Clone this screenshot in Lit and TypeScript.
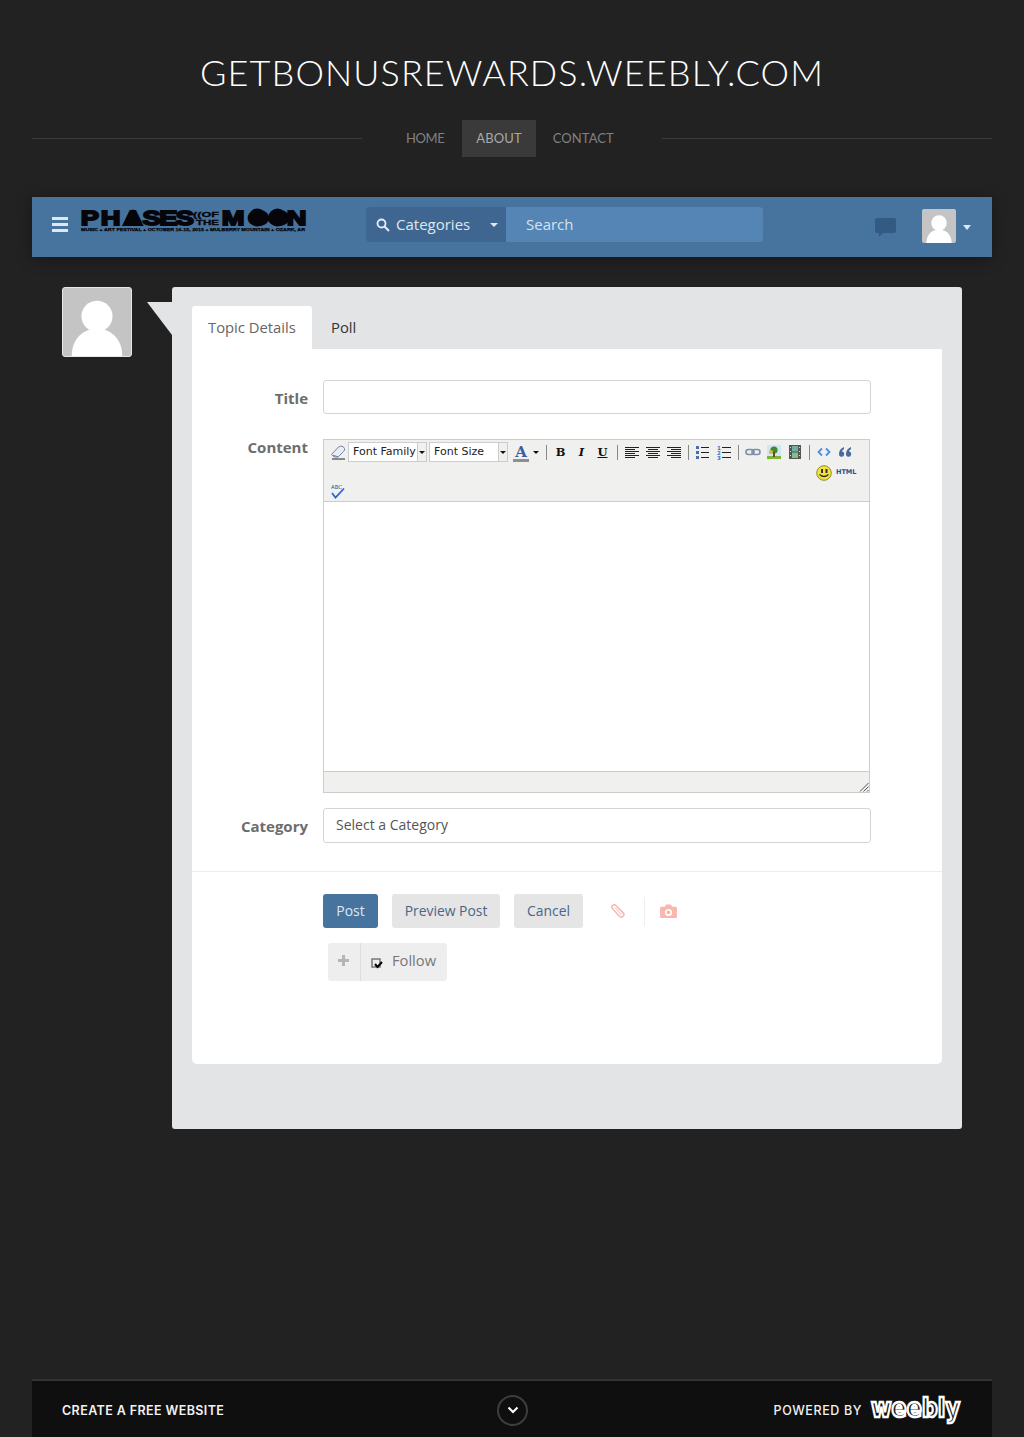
import { LitElement, html, css, svg } from 'lit';
import { customElement } from 'lit/decorators.js';

const person = html`<svg class="person" viewBox="0 0 70 70">
  <circle cx="35" cy="29" r="16" fill="#fff"></circle>
  <path d="M9 70C9 52 21 42 35 42s26 10 26 28z" fill="#fff"></path>
</svg>`;

// toolbar icons, all on a 16 box
const lines = (rows: number[][]) => rows.map(([a, b], i) =>
  svg`<rect x=${a} y=${3 + i * 2} width=${b - a} height="1" fill="#222"></rect>`);

const icons = {
  eraser: svg`<path d="M1.500 10.500l7-7.500q2-1.500 4.500-.5l1.500 2q.5 1.500-1 3l-5.500 5.500H4z" fill="#e8edf6" stroke="#6f84a8"></path><path d="M3 11l5 2" stroke="#6f84a8" fill="none"></path><path d="M2 15h13" stroke="#222"></path>`,
  left: lines([[1, 15], [1, 11], [1, 15], [1, 11], [1, 15], [1, 11]]),
  center: lines([[1, 15], [3, 13], [1, 15], [3, 13], [1, 15], [3, 13]]),
  right: lines([[1, 15], [5, 15], [1, 15], [5, 15], [1, 15], [5, 15]]),
  bullets: svg`<g fill="#4a6fa8"><rect x="1" y="2" width="3" height="3"></rect><rect x="1" y="7" width="3" height="3"></rect><rect x="1" y="12" width="3" height="3"></rect></g>
    <g fill="#222"><rect x="6" y="3" width="8" height="1"></rect><rect x="6" y="8" width="8" height="1"></rect><rect x="6" y="13" width="8" height="1"></rect></g>`,
  numbers: svg`<g fill="#3f6fd0" font-family="DejaVu Sans" font-weight="700" font-size="5.500"><text x="1" y="5.500">1</text><text x="1" y="10.500">2</text><text x="1" y="15.500">3</text></g>
    <g fill="#222"><rect x="6" y="3" width="9" height="1"></rect><rect x="6" y="8" width="9" height="1"></rect><rect x="6" y="13" width="9" height="1"></rect></g>`,
  link: svg`<g fill="none" stroke="#7d8ea8" stroke-width="1.600"><rect x="1" y="5.500" width="8" height="5" rx="2.500"></rect><rect x="7" y="5.500" width="8" height="5" rx="2.500"></rect></g>`,
  image: svg`<rect x="1" y="1" width="14" height="14" fill="#cfe6f5"></rect><rect x="1" y="12" width="14" height="3" fill="#7db536"></rect><circle cx="8" cy="6" r="3.600" fill="#3f8a2c"></circle><circle cx="5" cy="8" r="2" fill="#e0b040"></circle><rect x="7" y="8" width="2" height="5" fill="#6b4a20"></rect>`,
  film: svg`<rect x="2" y="1" width="12" height="14" fill="#555"></rect><rect x="5" y="2" width="6" height="5.500" fill="#6cb0a8"></rect><rect x="5" y="8.500" width="6" height="5.500" fill="#7fc08a"></rect><g fill="#ddd"><rect x="3" y="3" width="1" height="1"></rect><rect x="3" y="7" width="1" height="1"></rect><rect x="3" y="11" width="1" height="1"></rect><rect x="12" y="3" width="1" height="1"></rect><rect x="12" y="7" width="1" height="1"></rect><rect x="12" y="11" width="1" height="1"></rect></g>`,
  code: svg`<path d="M6 4.500L2.500 8 6 11.500M10 4.500L13.500 8 10 11.500" fill="none" stroke="#4a90e0" stroke-width="1.800"></path>`,
  quote: svg`<path d="M7 3Q2 5 2 10a2.600 2.600 0 1 0 3-2.400Q5 6 7 5zM14 3q-5 2-5 7a2.600 2.600 0 1 0 3-2.400Q12 6 14 5z" fill="#4a6a9c"></path>`,
  smile: svg`<circle cx="8" cy="8" r="7.300" fill="#f5e23a" stroke="#8f8a30"></circle><rect x="5" y="4" width="2" height="4" fill="#333"></rect><rect x="9.500" y="4" width="2" height="4" fill="#333"></rect><path d="M3.500 9.500q4.500 4 9 0" fill="none" stroke="#333" stroke-width="1.200"></path>`,
  spell: svg`<text x="1" y="6" font-family="DejaVu Sans" font-size="5.500" fill="#2f4f90" textLength="11" lengthAdjust="spacingAndGlyphs">ABC</text><path d="M2 10l3.500 4.500L14 5.500" fill="none" stroke="#2f62d8" stroke-width="1.800"></path>`,
};

const ico = (body: unknown) => html`<svg class="ico" viewBox="0 0 16 16">${body}</svg>`;

@customElement('app-root')
export class AppRoot extends LitElement {
  static styles = css`
    :host {
      display: block;
      min-height: 1437px;
      background: #222;
      font-family: "Open Sans", "Noto Sans", sans-serif;
      overflow: hidden;
    }
    * { box-sizing: border-box; }
    .title {
      margin: 0;
      padding-top: 50px;
      height: 120px;
      text-align: center;
      font: 300 36px/44px Lato, sans-serif;
      color: #fff;
      letter-spacing: 1.1px;
    }
    .menu {
      display: flex;
      align-items: center;
      height: 37px;
      padding: 0 32px;
    }
    .menu .line-out { flex: 1; height: 1px; background: #3c3c3c; }
    .menu .links { display: flex; width: 300px; padding-left: 30px; }
    .menu a {
      font: 400 13px/37px Lato, sans-serif;
      color: #818181;
      padding: 0 14px;
      letter-spacing: .1px;
    }
    .menu a.home { letter-spacing: -.4px; }
    .menu a.on { background: #3a3a3a; color: #a8a8a8; margin: 0 3px 0 4px; }
    .page { padding: 40px 32px 0; }
    .bar {
      display: flex;
      align-items: flex-start;
      height: 60px;
      background: #47739f;
      box-shadow: 0 2px 14px rgba(0, 0, 0, .35);
    }
    .burger { width: 16px; margin: 20px 12px 0 20px; display: grid; gap: 3px; }
    .burger i { display: block; height: 3px; background: #dfe8f1; }
    .logo { width: 228px; height: 26px; margin-top: 10px; display: block; }
    .cats {
      width: 140px;
      height: 35px;
      margin: 10px 0 0 58px;
      background: #3f6690;
      border-radius: 4px 0 0 4px;
      display: flex;
      align-items: center;
      padding: 0 0 2px 10px;
      color: #dfe8f1;
      font-size: 15px;
    }
    .cats svg { width: 14px; height: 14px; margin: 2px 6px 0 0; }
    .cats .caret { margin: 2px 0 0 20px; }
    .caret {
      width: 0;
      height: 0;
      border: 4px solid transparent;
      border-top-color: #dfe8f1;
      border-bottom: 0;
    }
    .search {
      width: 257px;
      height: 35px;
      margin-top: 10px;
      background: #5585b5;
      border-radius: 0 4px 4px 0;
      padding-left: 20px;
      color: #d5e2ef;
      font-size: 15px;
      line-height: 35px;
    }
    .chat { width: 21px; height: 20px; margin: 21px 26px 0 112px; }
    .me {
      width: 34px;
      height: 34px;
      margin-top: 12px;
      background: #c4c4c4;
      border-radius: 2px;
      overflow: hidden;
    }
    .bar > .caret { margin: 28px 0 0 7px; border-width: 5px 4.500px 0; }
    .layout { display: flex; align-items: flex-start; padding: 30px 30px 0; }
    .avatar {
      width: 70px;
      height: 70px;
      background: #c4c4c4;
      border: 1px solid #e6e6e6;
      border-radius: 3px;
      overflow: hidden;
      flex: none;
    }
    .person { display: block; width: 100%; height: 100%; }
    .card {
      position: relative;
      margin-left: 40px;
      width: 790px;
      height: 842px;
      padding: 19px 20px 0;
      background: #e3e4e6;
      border-radius: 3px;
    }
    .tip {
      position: absolute;
      left: -25px;
      top: 15px;
      width: 25px;
      height: 33px;
      background: #e3e4e6;
      clip-path: polygon(0 0, 100% 0, 100% 100%);
    }
    .tabs { display: flex; height: 43px; }
    .tabs span {
      padding: 0 15px;
      font-size: 14.800px;
      line-height: 43px;
      color: #333;
      white-space: nowrap;
    }
    .tabs span.on {
      padding: 0 16px;
      width: 120px;
      background: #fff;
      color: #666;
      margin-right: 4px;
      border-radius: 3px 3px 0 0;
    }
    .panel {
      height: 715px;
      background: #fff;
      border-radius: 0 0 5px 5px;
    }
    .row { display: flex; padding-top: 31px; }
    .row label {
      width: 116px;
      height: 34px;
      margin-right: 15px;
      text-align: right;
      font-size: 15px;
      font-weight: 700;
      color: #6d6d6d;
      line-height: 36px;
    }
    .field {
      width: 548px;
      height: 34px;
      border: 1px solid #d4d4d4;
      border-radius: 3px;
    }
    .editor-row { padding-top: 25px; }
    .editor-row label { line-height: 16px; }
    .editor { width: 547px; height: 354px; border: 1px solid #ccc; display: flex; flex-direction: column; }
    .tools { height: 62px; background: #f0f0ee; border-bottom: 1px solid #ccc; padding-left: 6px; }
    .line { display: flex; align-items: center; height: 24px; }
    .line.second {
      height: 17px;
      margin-left: 486px;
      font: 700 6.500px/17px "DejaVu Sans", sans-serif;
      color: #26508f;
    }
    .line.second span { margin-left: 4px; }
    .line.third { height: 20px; }
    .ico { display: block; width: 16px; height: 16px; flex: none; }
    .cell { width: 21px; display: flex; justify-content: center; font: 700 11.500px "DejaVu Serif", serif; color: #111; flex: none; }
    .cell.i { font-style: italic; }
    .cell.u { text-decoration: underline; }
    .sep { width: 8px; height: 15px; flex: none; display: flex; justify-content: center; }
    .sep::before { content: ""; width: 1px; background: #888; }
    .pick {
      width: 70px;
      height: 20px;
      margin-left: 2px;
      background: #fff;
      border: 1px solid #ccc;
      padding-left: 4px;
      font: 11px/18px "DejaVu Sans", sans-serif;
      color: #222;
      flex: none;
      white-space: nowrap;
    }
    .open {
      width: 9px;
      height: 20px;
      background: #f0f0ee;
      border: 1px solid #ccc;
      border-left: 0;
      display: flex;
      align-items: center;
      justify-content: center;
      flex: none;
    }
    .down { width: 0; height: 0; border: 3px solid transparent; border-top-color: #111; border-bottom: 0; }
    .color {
      width: 16px;
      height: 20px;
      margin-left: 5px;
      padding-top: 3px;
      text-align: center;
      font: 700 15px/14px "DejaVu Serif", serif;
      color: #3a5fa0;
      border-bottom: 3px solid #8f8f8f;
      flex: none;
    }
    .colorarrow { width: 13px; display: flex; justify-content: center; flex: none; }
    .write { flex: 1; }
    .status { height: 21px; background: #f0f0ee; border-top: 1px solid #ccc; position: relative; }
    .grip { position: absolute; right: 0; bottom: 0; width: 10px; height: 10px; }
    .select-row { padding-top: 15px; }
    .select-row label { line-height: 36px; }
    .select { height: 35px; padding-left: 12px; font-size: 14px; line-height: 32px; color: #555; }
    .divider { height: 1px; background: #ececec; margin-top: 28px; }
    .actions { display: flex; align-items: center; padding: 22px 0 0 131px; }
    .btn {
      height: 34px;
      border-radius: 3px;
      background: #e5e5e5;
      color: #47668a;
      font-size: 13.900px;
      line-height: 34px;
      text-align: center;
      margin-right: 14px;
    }
    .btn.main { width: 55px; background: #47739f; color: #dfe8f1; }
    .btn.preview { width: 108px; }
    .btn.cancel { width: 69px; }
    .clip { width: 16px; height: 16px; margin-left: 13px; }
    .divide { width: 1px; height: 29px; background: #eee; margin: 0 15px 0 18px; }
    .cam { width: 17px; height: 15px; }
    .follow {
      display: flex;
      width: 119px;
      height: 38px;
      margin: 15px 0 0 136px;
      background: #eee;
      border-radius: 3px;
      color: #777;
      font-size: 14.700px;
      line-height: 35px;
    }
    .plus { width: 33px; border-right: 1px solid #ddd; position: relative; flex: none; }
    .plus::before, .plus::after { content: ""; position: absolute; background: #b5b5b5; }
    .plus::before { left: 10px; top: 16px; width: 11px; height: 3px; }
    .plus::after { left: 14px; top: 12px; width: 3px; height: 11px; }
    .tick { width: 13px; height: 13px; margin: 14px 8px 0 10px; flex: none; }
    .foot {
      display: flex;
      align-items: center;
      height: 58px;
      margin: 250px 32px 0;
      padding: 2px 30px 0;
      background: #0f0f0f;
      border-top: 2px solid #333;
      color: #f2f2f2;
      font: 600 12.500px Inter, sans-serif;
    }
    .foot .left { width: 435px; letter-spacing: .4px; }
    .roll { width: 31px; height: 31px; border: 2px solid #3d3d3d; border-radius: 50%; display: flex; align-items: center; justify-content: center; }
    .roll svg { width: 12px; height: 8px; }
    .foot .right { margin-left: auto; font-weight: 500; letter-spacing: .6px; }
    .weebly { width: 92px; height: 36px; margin-left: 8px; }
  `;

  render() {
    return html`
      <h1 class="title">GETBONUSREWARDS.WEEBLY.COM</h1>
      <nav class="menu">
        <div class="line-out"></div>
        <div class="links">
          <a class="home">HOME</a><a class="on">ABOUT</a><a>CONTACT</a>
        </div>
        <div class="line-out"></div>
      </nav>
      <div class="page">
        <header class="bar">
          <div class="burger"><i></i><i></i><i></i></div>
          <svg class="logo" viewBox="0 0 228 26">
            <g fill="#05050a" stroke="#05050a" font-family="Liberation Sans" font-weight="700">
              <g transform="scale(1.300 1)" font-size="21" stroke-width="1.800">
                <text x="0.500 16 33 48 61 73.600" y="18">PHASES</text>
                <text x="109 129 144.600 159" y="18">MOON</text>
              </g>
              <text x="113" y="9.500" font-size="7.500" stroke-width=".3" textLength="26" lengthAdjust="spacingAndGlyphs">((OF</text>
              <text x="116" y="18" font-size="7.500" stroke-width=".3" textLength="23" lengthAdjust="spacingAndGlyphs">THE</text>
              <text x="1" y="24" font-size="4.200" stroke-width=".25" textLength="224" lengthAdjust="spacingAndGlyphs">MUSIC + ART FESTIVAL + OCTOBER 16-15, 2015 + MULBERRY MOUNTAIN + OZARK, AR</text>
              <polygon points="43,19 53,2 63,19" stroke="none"></polygon>
              <circle cx="177.500" cy="10.500" r="9" stroke="none"></circle>
              <circle cx="197.500" cy="10.500" r="9" stroke="none"></circle>
            </g>
          </svg>
          <div class="cats">
            <svg viewBox="0 0 14 14"><circle cx="5.500" cy="5.500" r="4" fill="none" stroke="#e6edf4" stroke-width="1.800"></circle><path d="M8.500 8.500L13 13" stroke="#e6edf4" stroke-width="2"></path></svg>
            Categories
            <span class="caret"></span>
          </div>
          <div class="search">Search</div>
          <svg class="chat" viewBox="0 0 21 20"><path d="M2 0h17a2 2 0 0 1 2 2v11a2 2 0 0 1-2 2H8l-4 4v-4H2a2 2 0 0 1-2-2V2a2 2 0 0 1 2-2z" fill="#335a82"></path></svg>
          <div class="me">${person}</div>
          <span class="caret"></span>
        </header>
        <div class="layout">
          <div class="avatar">${person}</div>
          <div class="card">
            <div class="tip"></div>
            <div class="tabs"><span class="on">Topic Details</span><span>Poll</span></div>
            <div class="panel">
              <div class="row"><label>Title</label><div class="field"></div></div>
              <div class="row editor-row">
                <label>Content</label>
                <div class="editor">
                  <div class="tools">
                    <div class="line">
                      ${ico(icons.eraser)}
                      <div class="pick">Font Family</div><div class="open"><i class="down"></i></div>
                      <div class="pick">Font Size</div><div class="open"><i class="down"></i></div>
                      <div class="color">A</div>
                      <div class="colorarrow"><i class="down"></i></div>
                      <i class="sep"></i>
                      <span class="cell">B</span><span class="cell i">I</span><span class="cell u">U</span>
                      <i class="sep"></i>
                      <span class="cell">${ico(icons.left)}</span><span class="cell">${ico(icons.center)}</span><span class="cell">${ico(icons.right)}</span>
                      <i class="sep"></i>
                      <span class="cell">${ico(icons.bullets)}</span><span class="cell">${ico(icons.numbers)}</span>
                      <i class="sep"></i>
                      <span class="cell">${ico(icons.link)}</span><span class="cell">${ico(icons.image)}</span><span class="cell">${ico(icons.film)}</span>
                      <i class="sep"></i>
                      <span class="cell">${ico(icons.code)}</span><span class="cell">${ico(icons.quote)}</span>
                    </div>
                    <div class="line second">${ico(icons.smile)}<span>HTML</span></div>
                    <div class="line third">${ico(icons.spell)}</div>
                  </div>
                  <div class="write"></div>
                  <div class="status">
                    <svg class="grip" viewBox="0 0 10 10"><path d="M9.500 1L1 9.500M9.500 4.500L4.500 9.500M9.500 8L8 9.500" stroke="#555" fill="none"></path></svg>
                  </div>
                </div>
              </div>
              <div class="row select-row"><label>Category</label><div class="field select">Select a Category</div></div>
              <div class="divider"></div>
              <div class="actions">
                <div class="btn main">Post</div>
                <div class="btn preview">Preview Post</div>
                <div class="btn cancel">Cancel</div>
                <svg class="clip" viewBox="0 0 16 16"><path d="M13.500 10.500L6 2.500a2.300 2.300 0 0 0-3.500 3l7 8a2.700 2.700 0 0 0 4-3.500L7 3.800" fill="none" stroke="#f9b7ae" stroke-width="1.500"></path><path d="M5 4.500l6.500 7.500" stroke="#f9b7ae"></path></svg>
                <div class="divide"></div>
                <svg class="cam" viewBox="0 0 18 16"><path d="M1.500 3H5l1.500-2.500h5L13 3h3.500A1.500 1.500 0 0 1 18 4.500v9a1.500 1.500 0 0 1-1.500 1.500h-15A1.500 1.500 0 0 1 0 13.500v-9A1.500 1.500 0 0 1 1.500 3z" fill="#f9b7ae"></path><circle cx="9" cy="9" r="3.800" fill="#fff"></circle><circle cx="9" cy="9" r="2" fill="#f9b7ae"></circle></svg>
              </div>
              <div class="follow">
                <div class="plus"></div>
                <svg class="tick" viewBox="0 0 13 13"><rect x="1" y="2" width="8" height="8" fill="#eee" stroke="#777" stroke-width="1.500"></rect><path d="M4 7l2.500 3L11 5" fill="none" stroke="#000" stroke-width="2"></path></svg>
                Follow
              </div>
            </div>
          </div>
        </div>
      </div>
      <footer class="foot">
        <div class="left">CREATE A FREE WEBSITE</div>
        <div class="roll"><svg viewBox="0 0 12 8"><path d="M1.500 1.500L6 6l4.500-4.500" fill="none" stroke="#fff" stroke-width="2"></path></svg></div>
        <div class="right">POWERED BY</div>
        <svg class="weebly" viewBox="0 0 92 36">
          <text transform="scale(1 1.250)" x="1" y="20" font-family="DejaVu Sans" font-weight="700" font-size="21" textLength="89" lengthAdjust="spacingAndGlyphs" fill="#0f0f0f" stroke="#fff" stroke-width="2">weebly</text>
        </svg>
      </footer>
    `;
  }
}
